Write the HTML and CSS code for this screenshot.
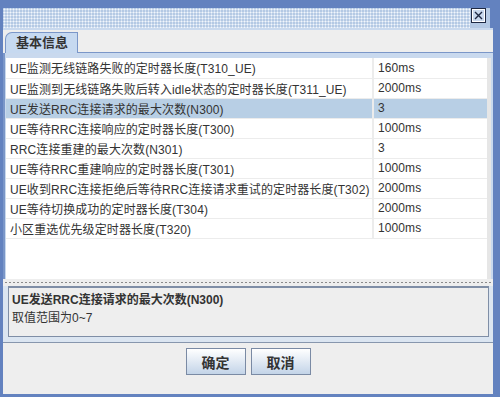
FILE: index.html
```html
<!DOCTYPE html>
<html lang="zh-CN">
<head>
    <meta charset="UTF-8">
    <title>基本信息</title>
    <link rel="stylesheet" href="styles.css">
</head>
<body>
    <div class="window">
        <div class="titlebar">
            <div class="grip"></div>
            <button class="close-btn" title="关闭">
                <svg width="15" height="15" viewBox="0 0 15 15">
                    <rect x="0.5" y="0.5" width="14" height="14" fill="#c9d9ee" stroke="#1f2a44"/>
                    <rect x="1.5" y="1.5" width="12" height="12" fill="none" stroke="#ffffff"/>
                    <path d="M4 4 L11 11 M11 4 L4 11" stroke="#1f2a44" stroke-width="1.4"/>
                </svg>
            </button>
        </div>

        <div class="content">
            <div class="tabs">
                <div class="tab">基本信息</div>
                <div class="tab-rest"></div>
            </div>

            <div class="tab-panel">
                <div class="table-wrap">
                    <table class="params">
                        <tr><td>UE监测无线链路失败的定时器长度(T310_UE)</td><td>160ms</td></tr>
                        <tr><td>UE监测到无线链路失败后转入idle状态的定时器长度(T311_UE)</td><td>2000ms</td></tr>
                        <tr class="selected"><td>UE发送RRC连接请求的最大次数(N300)</td><td>3</td></tr>
                        <tr><td>UE等待RRC连接响应的定时器长度(T300)</td><td>1000ms</td></tr>
                        <tr><td>RRC连接重建的最大次数(N301)</td><td>3</td></tr>
                        <tr><td>UE等待RRC重建响应的定时器长度(T301)</td><td>1000ms</td></tr>
                        <tr><td>UE收到RRC连接拒绝后等待RRC连接请求重试的定时器长度(T302)</td><td>2000ms</td></tr>
                        <tr><td>UE等待切换成功的定时器长度(T304)</td><td>2000ms</td></tr>
                        <tr><td>小区重选优先级定时器长度(T320)</td><td>1000ms</td></tr>
                    </table>
                </div>
                <div class="scroll-gutter"></div>
            </div>

            <div class="splitter"></div>

            <div class="desc-panel">
                <div class="desc-box">
                    <div class="desc-title">UE发送RRC连接请求的最大次数(N300)</div>
                    <div class="desc-text">取值范围为0~7</div>
                </div>
            </div>

            <div class="buttons">
                <button class="btn">确定</button>
                <button class="btn">取消</button>
            </div>
        </div>
    </div>
</body>
</html>
```

FILE: styles.css
```css
* {
    margin: 0;
    padding: 0;
    box-sizing: border-box;
}

body {
    width: 500px;
    height: 397px;
    font-family: 'Liberation Sans', 'Noto Sans CJK SC', sans-serif;
    font-size: 12px;
    color: #333333;
    background-color: #6382bf;
}

.window {
    width: 500px;
    height: 397px;
    border-left: 3px solid #6382bf;
    border-right: 7px solid #6382bf;
    border-bottom: 3px solid #6382bf;
    display: flex;
    flex-direction: column;
}

.titlebar {
    height: 30px;
    padding-top: 8px;
    display: flex;
    align-items: flex-start;
    background-color: #6382bf;
    border-bottom: 2px solid #c9d9ee;
}

.grip {
    flex: 1;
    height: 20px;
    background-color: #b4c9e4;
    background-image: radial-gradient(circle, #f2f6fc 0.9px, transparent 1.1px);
    background-size: 3px 3px;
}

.close-btn {
    width: 20px;
    height: 20px;
    border: none;
    background-color: #b4c9e4;
    display: flex;
    align-items: flex-start;
    justify-content: flex-start;
    padding-left: 1px;
    margin-right: 3px;
}

.close-btn svg {
    display: block;
}

.content {
    flex: 1;
    background-color: #eeeeee;
    display: flex;
    flex-direction: column;
}

.tabs {
    display: flex;
    align-items: flex-end;
    height: 23px;
    padding-left: 2px;
}

.tab {
    width: 73px;
    height: 21px;
    border: 1px solid #7a96c8;
    border-bottom: none;
    border-top-left-radius: 7px;
    background-color: #c6d9f0;
    font-weight: bold;
    font-size: 13px;
    color: #333333;
    padding-left: 10px;
    line-height: 20px;
}

.tab-rest {
    flex: 1;
    border-bottom: 1px solid #7a96c8;
}

.tab-panel {
    height: 226px;
    display: flex;
    border-left: 2px solid #7a96c8;
    background-color: #c9d9ee;
    padding: 5px 0 0 1px;
}

.table-wrap {
    width: 481px;
    background-color: #ffffff;
}

.scroll-gutter {
    width: 4px;
    background-color: #e6e6e6;
}

.params {
    width: 100%;
    border-collapse: collapse;
    table-layout: fixed;
}

.params td {
    height: 20px;
    padding: 0 0 0 4px;
    border-bottom: 1px solid #ececec;
    white-space: nowrap;
    overflow: hidden;
    vertical-align: middle;
    letter-spacing: 0.1px;
}

.params td:first-child {
    width: 367px;
    border-right: 2px solid #ececec;
}

.params tr.selected td {
    background-color: #b8cfe5;
}

.splitter {
    height: 7px;
    background-color: #eeeeee;
    background-image: radial-gradient(circle, #8a8a8a 0.6px, transparent 0.9px);
    background-size: 4px 3px;
    background-position: 1px 2px;
    background-repeat: repeat-x;
}

.desc-panel {
    height: 57px;
    background-color: #dbe5f1;
    padding: 0 4px 5px 5px;
    border-bottom: 1px solid #8796ad;
}

.desc-box {
    height: 100%;
    border: 1px solid #7f8ea6;
    border-top-width: 2px;
    background-color: #eeeeee;
    padding: 3px 0 0 3px;
}

.desc-title {
    font-weight: bold;
    line-height: 18px;
}

.desc-text {
    line-height: 19px;
}

.buttons {
    flex: 1;
    display: flex;
    justify-content: center;
    align-items: flex-start;
    gap: 5px;
    padding-top: 5px;
}

.btn {
    width: 60px;
    height: 27px;
    border: 1px solid #7a8aa4;
    background: linear-gradient(#ffffff, #c3d4e8);
    font-family: 'Noto Sans CJK SC', sans-serif;
    font-weight: bold;
    font-size: 14px;
    color: #333333;
}
```
